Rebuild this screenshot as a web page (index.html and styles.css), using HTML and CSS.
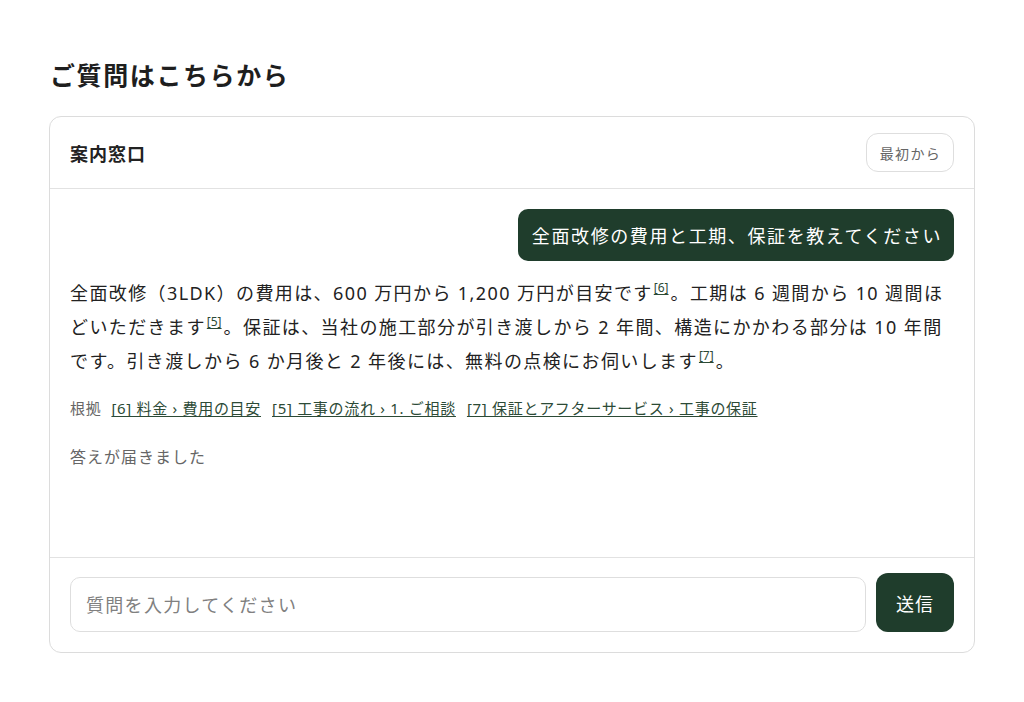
FILE: index.html
```html
<!DOCTYPE html>
<html lang="ja">
<head>
<meta charset="utf-8">
<link rel="stylesheet" href="styles.css">
</head>
<body>
<main class="page">
  <h1 class="title">ご質問はこちらから</h1>
  <section class="card">
    <header class="card-head">
      <h2 class="card-title">案内窓口</h2>
      <button class="reset">最初から</button>
    </header>
    <div class="card-body">
      <div class="user-row"><div class="bubble">全面改修の費用と工期、保証を教えてください</div></div>
      <p class="answer">全面改修（3LDK）の費用は、600 万円から 1,200 万円が目安です<sup><a href="#">[6]</a></sup>。工期は 6 週間から 10 週間ほどいただきます<sup><a href="#">[5]</a></sup>。保証は、当社の施工部分が引き渡しから 2 年間、構造にかかわる部分は 10 年間です。引き渡しから 6 か月後と 2 年後には、無料の点検にお伺いします<sup><a href="#">[7]</a></sup>。</p>
      <div class="sources"><span class="src-label">根拠</span><a href="#">[6] 料金 › 費用の目安</a><a href="#">[5] 工事の流れ › 1. ご相談</a><a href="#">[7] 保証とアフターサービス › 工事の保証</a></div>
      <p class="status">答えが届きました</p>
    </div>
    <footer class="card-foot">
      <input class="ask" type="text" placeholder="質問を入力してください">
      <button class="send">送信</button>
    </footer>
  </section>
</main>
</body>
</html>
```
FILE: styles.css
```css
* { box-sizing: border-box; }
html, body { margin: 0; background: #fff; }
body {
  font-family: "Noto Sans", "Noto Sans CJK JP", sans-serif;
  color: #222;
}
.page {
  padding: 52px 49px 0 49px;
  width: 1024px;
}
.title {
  margin: 0 0 18px 1px;
  font-size: 25px;
  letter-spacing: 1.6px;
  line-height: 46px;
  font-weight: 700;
  color: #1e1e1e;
}
.card {
  width: 926px;
  border: 1px solid #dcdcdc;
  border-radius: 12px;
  overflow: hidden;
}
.card-head {
  height: 72px;
  display: flex;
  align-items: center;
  justify-content: space-between;
  padding: 0 20px;
  border-bottom: 1px solid #e2e2e2;
}
.card-title {
  margin: 0;
  font-size: 18px;
  letter-spacing: 1px;
  font-weight: 700;
  color: #222;
}
.reset {
  height: 39px;
  padding: 0 12px 0 13px;
  border: 1px solid #dedede;
  border-radius: 12px;
  background: #fff;
  font-family: inherit;
  font-size: 14px;
  letter-spacing: 1.3px;
  color: #666;
}
.card-body {
  height: 369px;
  padding: 20px 20px 0 20px;
  border-bottom: 1px solid #e2e2e2;
}
.user-row {
  display: flex;
  justify-content: flex-end;
}
.bubble {
  background: #1f3d2c;
  color: #fff;
  border-radius: 10px;
  padding: 0 12px 0 14px;
  height: 52px;
  display: flex;
  align-items: center;
  font-size: 18px;
  letter-spacing: 1.6px;
}
.answer {
  margin: 15px 0 0 0;
  font-size: 18px;
  letter-spacing: 1.4px;
  line-height: 34px;
  color: #222;
}
.answer sup {
  font-size: 12px;
  letter-spacing: 0;
  line-height: 0;
  vertical-align: 8px;
  margin: 0 2px 0 1px;
}
.answer sup a, .sources a {
  color: #2c4a36;
  text-decoration: underline;
  text-underline-offset: 2px;
}
.sources {
  margin-top: 19px;
  display: flex;
  gap: 11px;
  font-size: 15px;
  letter-spacing: 0.7px;
  line-height: 22px;
}
.src-label { color: #666; margin-right: -1px; }
.status {
  margin: 25px 0 0 0;
  font-size: 16px;
  letter-spacing: 1px;
  color: #666;
}
.card-foot {
  display: flex;
  align-items: flex-end;
  gap: 10px;
  padding: 15px 20px 20px 20px;
}
.ask {
  flex: 1;
  height: 55px;
  border: 1px solid #dedede;
  border-radius: 10px;
  padding: 0 15px;
  font-family: inherit;
  font-size: 18px;
  letter-spacing: 1.3px;
  color: #222;
}
.ask::placeholder { color: #808080; }
.send {
  width: 78px;
  height: 59px;
  border: 0;
  border-radius: 12px;
  background: #1f3d2c;
  color: #fff;
  font-family: inherit;
  font-size: 18px;
  letter-spacing: 1px;
}
```
